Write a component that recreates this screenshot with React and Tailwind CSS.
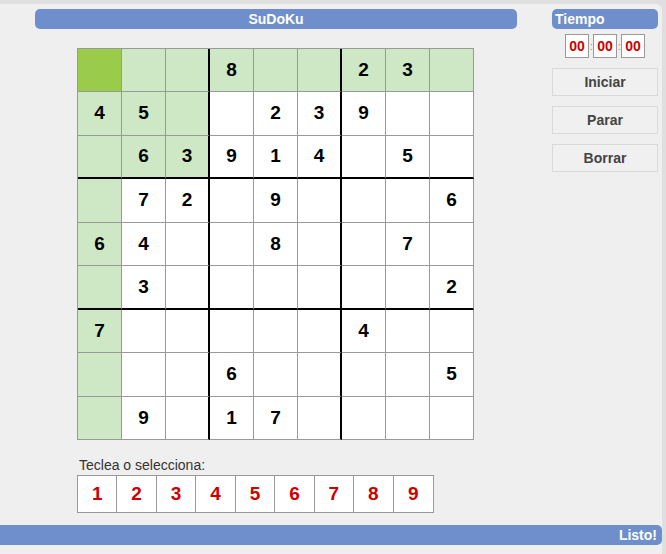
import React from 'react';

const puzzle = [
  [0, 0, 0, 8, 0, 0, 2, 3, 0],
  [4, 5, 0, 0, 2, 3, 9, 0, 0],
  [0, 6, 3, 9, 1, 4, 0, 5, 0],
  [0, 7, 2, 0, 9, 0, 0, 0, 6],
  [6, 4, 0, 0, 8, 0, 0, 7, 0],
  [0, 3, 0, 0, 0, 0, 0, 0, 2],
  [7, 0, 0, 0, 0, 0, 4, 0, 0],
  [0, 0, 0, 6, 0, 0, 0, 0, 5],
  [0, 9, 0, 1, 7, 0, 0, 0, 0],
];

const Cell = ({ value, r, c }) => {
  const selected = r === 0 && c === 0;
  const related = r === 0 || c === 0 || (r < 3 && c < 3);
  const bg = selected ? 'bg-[#9bcb4a]' : related ? 'bg-[#cee7c5]' : 'bg-white';
  const right = c === 2 || c === 5 ? 'border-r-2 border-r-black' : 'border-r border-r-[#999]';
  const bottom = r === 2 || r === 5 ? 'border-b-2 border-b-black' : 'border-b border-b-[#999]';
  return (
    <div className={`${bg} ${right} ${bottom} flex items-center justify-center text-[19px] font-bold text-black`}>
      {value || ''}
    </div>
  );
};

const TimeBox = () => (
  <div className="w-[24px] h-[24px] bg-white border border-[#999] flex items-center justify-center text-[14px] font-bold text-[#c00]">
    00
  </div>
);

const SudokuPage = () => {
  return (
    <div className="w-full h-screen bg-[#dfdfdf] pt-[4px] pr-[4px]" style={{ fontFamily: '"Liberation Sans", Arial, sans-serif' }}>
      <div className="h-full bg-[#efefef] rounded-tr-[6px] flex flex-col pt-[5px]">
        <div className="flex">
          {/* left: board */}
          <div className="ml-[35px] w-[482px]">
            <div className="h-[20px] rounded-[5px] bg-[#6e8fcb] text-white font-bold text-[14px] leading-[20px] text-center">
              SuDoKu
            </div>
            <div className="ml-[42px] mt-[19px] w-[397px] h-[392px] grid grid-cols-9 grid-rows-9 border-l border-t border-[#999]">
              {puzzle.map((row, r) =>
                row.map((v, c) => <Cell key={`${r}-${c}`} value={v} r={r} c={c} />)
              )}
            </div>
            <div className="ml-[44px] mt-[17px] text-[14px] leading-[16px] text-[#333]">Teclea o selecciona:</div>
            <div className="ml-[42px] mt-[2px] w-[357px] h-[38px] grid grid-cols-9 border border-[#999] bg-white">
              {[1, 2, 3, 4, 5, 6, 7, 8, 9].map((n) => (
                <div
                  key={n}
                  className={`flex items-center justify-center text-[19px] font-bold text-[#c00] ${n < 9 ? 'border-r border-[#999]' : ''}`}
                >
                  {n}
                </div>
              ))}
            </div>
          </div>

          {/* right: timer */}
          <div className="ml-[35px] w-[106px]">
            <div className="h-[20px] rounded-[5px] bg-[#6e8fcb] text-white font-bold text-[14px] leading-[20px] pl-[3px]">
              Tiempo
            </div>
            <div className="mt-[5px] flex items-center justify-center gap-[1px]">
              <TimeBox />
              <span className="text-[10px] text-[#c87a2a] w-[2px] text-center">:</span>
              <TimeBox />
              <span className="text-[10px] text-[#c87a2a] w-[2px] text-center">:</span>
              <TimeBox />
            </div>
            <div className="mt-[10px] flex flex-col gap-[10px]">
              {['Iniciar', 'Parar', 'Borrar'].map((b) => (
                <div
                  key={b}
                  className="h-[28px] border border-[#d9d9d9] bg-[#f0f0f0] text-[#444] font-bold text-[14px] flex items-center justify-center"
                >
                  {b}
                </div>
              ))}
            </div>
          </div>
        </div>

        <div className="mt-[12px] h-[20px] bg-[#6e8fcb] rounded-r-[5px] text-white font-bold text-[14px] leading-[20px] text-right pr-[5px]">
          Listo!
        </div>
      </div>
    </div>
  );
};

export default SudokuPage;
